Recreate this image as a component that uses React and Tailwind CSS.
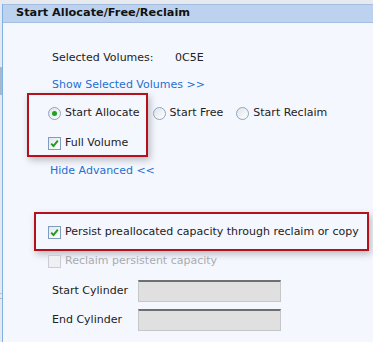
import React from "react";

const font = { fontFamily: '"DejaVu Sans", Verdana, sans-serif' };

function Radio({ checked }) {
  return (
    <span className="relative inline-flex h-[13px] w-[13px] shrink-0 items-center justify-center rounded-full border border-[#8ea4bd] bg-[linear-gradient(135deg,#dfe3e8,#ffffff)]">
      {checked && <span className="h-[5px] w-[5px] rounded-full bg-[#1ea21e]" />}
    </span>
  );
}

function Check({ checked, disabled }) {
  return (
    <span
      className={
        "inline-flex h-[13px] w-[13px] shrink-0 items-center justify-center border " +
        (disabled
          ? "border-[#c9ccd2] bg-[#eef0f3]"
          : "border-[#7f9cbd] bg-[linear-gradient(135deg,#e3e7ec,#ffffff)]")
      }
    >
      {checked && (
        <svg width="9" height="9" viewBox="0 0 9 9">
          <path d="M1.2 4.6 L3.5 7 L7.8 1.6" fill="none" stroke="#1f9a1f" strokeWidth="1.9" />
        </svg>
      )}
    </span>
  );
}

export default function App() {
  return (
    <div className="flex h-[342px] w-[373px] overflow-hidden bg-[#e6e9ee] pt-[4px] text-[11px] text-[#222]" style={font}>
      <div className="flex w-[2px] shrink-0 flex-col">
        <div className="mt-[63px] h-[28px] bg-[#a9b9cd]" />
        <div className="mt-[198px] h-px bg-[#c2c6cc]" />
        <div className="mt-[4px] h-px bg-[#b0b5bc]" />
      </div>
      <div className="h-full flex-1 border-l border-[#7fb0e6] bg-[#f5f7fe]">
        <div className="flex h-[19px] items-center border-b border-t border-[#a5bfe3] bg-[#bcd2ef] pl-[13px] text-[11.3px] font-bold text-[#111]">
          Start Allocate/Free/Reclaim
        </div>
        <div className="pl-[49px]">
          <div className="mt-[28px] flex h-[14px] items-center">
            <span className="w-[123px]">Selected Volumes:</span>
            <span>0C5E</span>
          </div>
          <div className="mt-[13px] flex h-[14px] items-center text-[#1f6fd1]">Show Selected Volumes &gt;&gt;</div>
        </div>
        <div className="ml-[24px] mt-[1px] h-[64px] w-[121px] border-2 border-[#b3121c] pl-[19px] pt-[11px] shadow-[2px_3px_7px_rgba(0,0,0,0.25)]">
          <div className="flex h-[14px] items-center whitespace-nowrap">
            <Radio checked />
            <span className="ml-[4px]">Start Allocate</span>
            <span className="ml-[13px] inline-flex items-center">
              <Radio />
              <span className="ml-[4px]">Start Free</span>
            </span>
            <span className="ml-[13px] inline-flex items-center">
              <Radio />
              <span className="ml-[4px]">Start Reclaim</span>
            </span>
          </div>
          <div className="mt-[16px] flex h-[14px] items-center">
            <Check checked />
            <span className="ml-[4px]">Full Volume</span>
          </div>
        </div>
        <div className="ml-[47px] mt-[7px] flex h-[14px] items-center text-[#1f6fd1]">Hide Advanced &lt;&lt;</div>
        <div className="ml-[31px] mt-[34px] h-[39px] w-[335px] border-2 border-[#b3121c] pl-[12px] pt-[11px] shadow-[2px_3px_7px_rgba(0,0,0,0.25)]">
          <div className="flex h-[14px] items-center whitespace-nowrap">
            <Check checked />
            <span className="ml-[4px]">Persist preallocated capacity through reclaim or copy</span>
          </div>
        </div>
        <div className="ml-[45px] mt-[3px] flex h-[14px] items-center text-[#a8abb0]">
          <Check disabled />
          <span className="ml-[4px]">Reclaim persistent capacity</span>
        </div>
        <div className="ml-[49px] mt-[12px] flex items-center">
          <span className="w-[86px]">Start Cylinder</span>
          <div className="h-[22px] w-[143px] border border-t-2 border-[#c4c6c8] border-t-[#6d7073] bg-[#dfe0df]" />
        </div>
        <div className="ml-[49px] mt-[7px] flex items-center">
          <span className="w-[86px]">End Cylinder</span>
          <div className="h-[22px] w-[143px] border border-t-2 border-[#c4c6c8] border-t-[#6d7073] bg-[#dfe0df]" />
        </div>
      </div>
    </div>
  );
}
